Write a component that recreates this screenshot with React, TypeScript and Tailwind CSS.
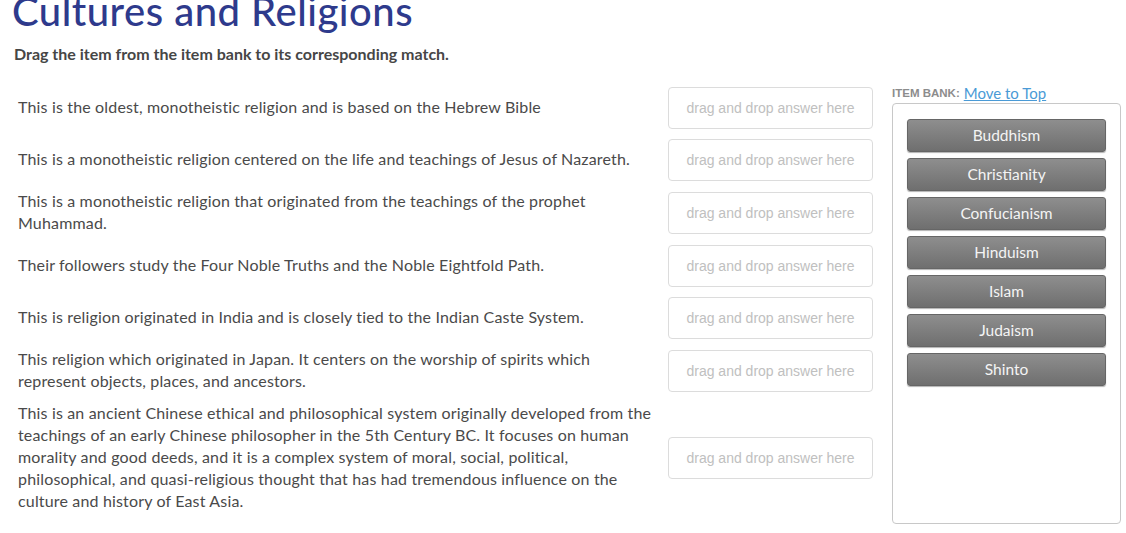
const rows: string[] = [
  "This is the oldest, monotheistic religion and is based on the Hebrew Bible",
  "This is a monotheistic religion centered on the life and teachings of Jesus of Nazareth.",
  "This is a monotheistic religion that originated from the teachings of the prophet Muhammad.",
  "Their followers study the Four Noble Truths and the Noble Eightfold Path.",
  "This is religion originated in India and is closely tied to the Indian Caste System.",
  "This religion which originated in Japan. It centers on the worship of spirits which represent objects, places, and ancestors.",
  "This is an ancient Chinese ethical and philosophical system originally developed from the teachings of an early Chinese philosopher in the 5th Century BC. It focuses on human morality and good deeds, and it is a complex system of moral, social, political, philosophical, and quasi-religious thought that has had tremendous influence on the culture and history of East Asia.",
];

const items = ["Buddhism", "Christianity", "Confucianism", "Hinduism", "Islam", "Judaism", "Shinto"];

const DropBox = () => (
  <div className="w-[205px] h-[42px] shrink-0 flex items-center justify-center rounded-[4px] border border-[#dcdcdc] bg-white text-[14px] text-[#c0c0c0] font-['Liberation_Sans',Arial,sans-serif]">
    drag and drop answer here
  </div>
);

export default function App() {
  return (
    <div className="w-[1126px] h-[533px] overflow-hidden bg-white font-['Lato',sans-serif] text-[#4a4a4a]">
      <h1 className="mt-[-9px] ml-[12px] text-[40px] leading-[40px] text-[#2e3a8c] font-['Lato',sans-serif] font-medium tracking-[0.5px]">
        Cultures and Religions
      </h1>
      <p className="mt-[13px] ml-[14px] text-[16px] leading-[20px] font-bold text-[#464646]">
        Drag the item from the item bank to its corresponding match.
      </p>

      <div className="flex mt-[23px] pl-[18px]">
        <div className="flex flex-col gap-[10px]">
          {rows.map((text) => (
            <div key={text} className="flex items-center gap-[10px]">
              <div className="w-[640px] -mt-px mb-px text-[16px] leading-[22px] tracking-[0.16px]">{text}</div>
              <DropBox />
            </div>
          ))}
        </div>

        <div className="ml-[19px] mt-[-3px] w-[229px]">
          <div className="h-[19px] flex items-center gap-[4px]">
            <span className="text-[11.5px] font-bold text-[#8c8c8c] font-['Liberation_Sans',Arial,sans-serif]">ITEM BANK:</span>
            <a href="#" className="text-[15px] text-[#4a9ad6] underline">Move to Top</a>
          </div>
          <div className="h-[421px] rounded-[4px] border border-[#c8c8c8] pt-[15px] pl-[14px] flex flex-col gap-[6px]">
            {items.map((item) => (
              <div
                key={item}
                className="w-[199px] h-[33px] flex items-center justify-center rounded-[3px] border border-[#666] bg-gradient-to-b from-[#8e8e8e] to-[#6f6f6f] text-[#f4f4f4] text-[15.5px] font-normal shadow-[0_1px_1px_rgba(0,0,0,0.3)]"
              >
                {item}
              </div>
            ))}
          </div>
        </div>
      </div>
    </div>
  );
}
